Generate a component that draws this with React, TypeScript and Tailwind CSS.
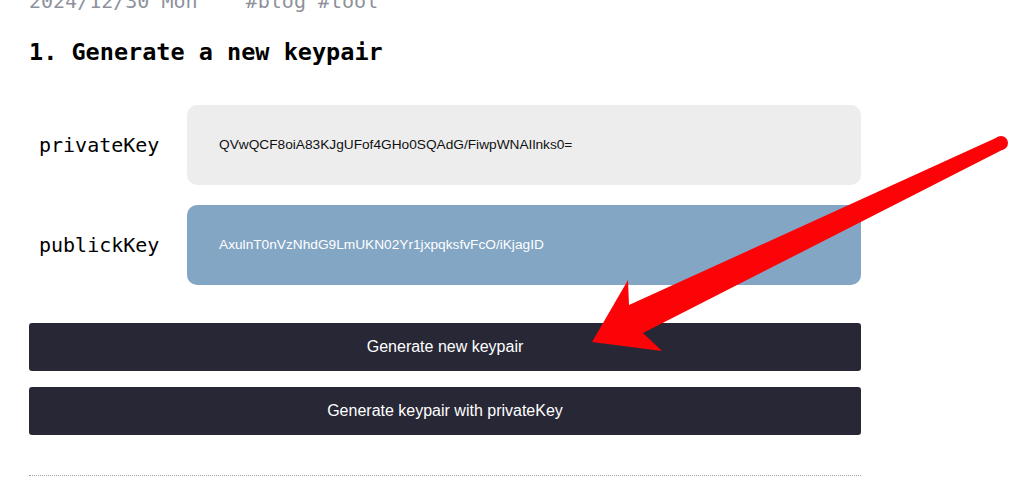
const mono = { fontFamily: '"DejaVu Sans Mono", "Liberation Mono", monospace' };

const KeyRow = ({ label, value, tone }: { label: string; value: string; tone: 'light' | 'blue' }) => (
  <div className="flex items-center">
    <div className="w-[158px] pl-[10px] text-[20px] text-black" style={mono}>
      {label}
    </div>
    <div
      className={
        tone === 'light'
          ? 'flex h-20 flex-1 items-center rounded-[10px] bg-[#ededed] px-8 text-[13.7px] text-[#111]'
          : 'flex h-20 flex-1 items-center rounded-[10px] bg-[#83a6c4] px-8 text-[13.7px] text-white'
      }
    >
      {value}
    </div>
  </div>
);

const Arrow = () => (
  <svg className="pointer-events-none absolute left-0 top-0" width="1021" height="493" viewBox="0 0 1021 493">
    <polygon
      fill="#fc0307"
      points="998,137 1004,149 643,333 662,351 592,342 628,280 629,305"
    />
    <circle cx="1001" cy="143" r="7" fill="#fc0307" />
  </svg>
);

export default function App() {
  return (
    <div className="relative h-[493px] overflow-hidden bg-white pl-[29px]" style={{ fontFamily: '"Liberation Sans", Arial, sans-serif' }}>
      <div className="w-[832px]">
        <p className="-mt-[14px] whitespace-pre text-[20px] leading-[30px] text-[#8e929c]" style={mono}>
          2024/12/30 Mon    #blog #tool
        </p>
        <h2 className="mt-[20px] text-[23.5px] font-bold leading-[32px] text-black" style={mono}>
          1. Generate a new keypair
        </h2>

        <div className="mt-[37px] flex flex-col gap-5">
          <KeyRow label="privateKey" value="QVwQCF8oiA83KJgUFof4GHo0SQAdG/FiwpWNAIlnks0=" tone="light" />
          <KeyRow label="publickKey" value="AxulnT0nVzNhdG9LmUKN02Yr1jxpqksfvFcO/iKjagID" tone="blue" />
        </div>

        <div className="mt-[38px] flex flex-col gap-4">
          <button className="h-12 w-full rounded-[3px] bg-[#282736] text-[16px] text-white">Generate new keypair</button>
          <button className="h-12 w-full rounded-[3px] bg-[#282736] text-[16px] text-white">
            Generate keypair with privateKey
          </button>
        </div>

        <div className="mt-10 border-t border-dotted border-[#a0a4ad]" />
      </div>
      <Arrow />
    </div>
  );
}
